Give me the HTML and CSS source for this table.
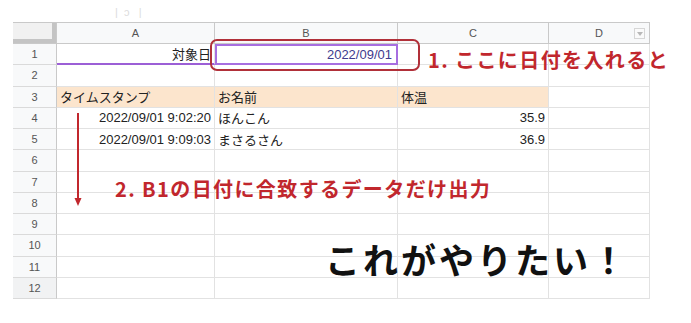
FILE: index.html
```html
<!DOCTYPE html>
<html lang="ja">
<head>
<meta charset="utf-8">
<link rel="stylesheet" href="styles.css">
</head>
<body>
<div class="page">
  <div class="topbar"><span class="ghost">|&nbsp;&nbsp;ɔ&nbsp;&nbsp;&nbsp;|</span></div>
  <div class="sheet">
    <div class="c corner"></div>
    <div class="c colh">A</div>
    <div class="c colh">B</div>
    <div class="c colh">C</div>
    <div class="c colh colh-d">D<span class="dd"></span></div>

    <div class="c rowh">1</div>
    <div class="c right a1">対象日</div>
    <div class="c right b1">2022/09/01</div>
    <div class="c"></div>
    <div class="c"></div>

    <div class="c rowh">2</div>
    <div class="c"></div><div class="c"></div><div class="c"></div><div class="c"></div>

    <div class="c rowh">3</div>
    <div class="c head">タイムスタンプ</div>
    <div class="c head">お名前</div>
    <div class="c head">体温</div>
    <div class="c"></div>

    <div class="c rowh">4</div>
    <div class="c right">2022/09/01 9:02:20</div>
    <div class="c">ほんこん</div>
    <div class="c right">35.9</div>
    <div class="c"></div>

    <div class="c rowh">5</div>
    <div class="c right">2022/09/01 9:09:03</div>
    <div class="c">まさるさん</div>
    <div class="c right">36.9</div>
    <div class="c"></div>

    <div class="c rowh">6</div>
    <div class="c"></div><div class="c"></div><div class="c"></div><div class="c"></div>
    <div class="c rowh">7</div>
    <div class="c"></div><div class="c"></div><div class="c"></div><div class="c"></div>
    <div class="c rowh">8</div>
    <div class="c"></div><div class="c"></div><div class="c"></div><div class="c"></div>
    <div class="c rowh">9</div>
    <div class="c"></div><div class="c"></div><div class="c"></div><div class="c"></div>
    <div class="c rowh">10</div>
    <div class="c"></div><div class="c"></div><div class="c"></div><div class="c"></div>
    <div class="c rowh">11</div>
    <div class="c"></div><div class="c"></div><div class="c"></div><div class="c"></div>
    <div class="c rowh rowh-sel">12</div>
    <div class="c"></div><div class="c"></div><div class="c"></div><div class="c"></div>
  </div>
</div>

<div class="callout-box"></div>
<div class="note note-1">1. ここに日付を入れると</div>
<svg class="arrow" width="10" height="94" viewBox="0 0 10 94">
  <line x1="5" y1="0" x2="5" y2="88" stroke="#c1272d" stroke-width="2"/>
  <polygon points="1.5,85 8.5,85 5,93" fill="#c1272d"/>
</svg>
<div class="note note-2">2. B1の日付に合致するデータだけ出力</div>
<div class="big">これがやりたい！</div>
</body>
</html>
```
FILE: styles.css
```css
html, body {
  margin: 0;
  padding: 0;
  background: #ffffff;
}
body {
  position: relative;
  width: 691px;
  height: 323px;
  overflow: hidden;
  font-family: "Liberation Sans", "Noto Sans CJK JP", sans-serif;
}
.page {
  padding-left: 13px;
}
.topbar {
  height: 22px;
  position: relative;
}
.ghost {
  position: absolute;
  left: 102px;
  top: 6px;
  font-size: 11px;
  color: #dcdcdc;
}
.sheet {
  display: grid;
  grid-template-columns: 44px 158px 183px 151px 101px;
  grid-template-rows: 21px repeat(12, 21.25px);
  width: 637px;
  border-top: 1px solid #c9c9c9;
}
.c {
  box-sizing: border-box;
  border-right: 1px solid #e2e2e2;
  border-bottom: 1px solid #e2e2e2;
  display: flex;
  align-items: center;
  padding: 0 3px;
  font-size: 13px;
  color: #222;
  white-space: nowrap;
  overflow: hidden;
  font-family: "Liberation Sans", "Noto Sans CJK JP", sans-serif;
}
.right {
  justify-content: flex-end;
}
.corner {
  background: #f1f1f1;
  border-right: 1px solid #c9c9c9;
  border-bottom: 1px solid #c9c9c9;
  box-shadow: inset -4px -4px 0 #c4c4c4;
}
.colh {
  background: #f8f9fa;
  border-right: 1px solid #c9c9c9;
  border-bottom: 1px solid #c9c9c9;
  justify-content: center;
  font-size: 11px;
  color: #555;
}
.colh-d {
  position: relative;
}
.dd {
  position: absolute;
  right: 4px;
  top: 5px;
  width: 11px;
  height: 11px;
  box-sizing: border-box;
  border: 1px solid #d6d6d6;
  background: #fafafa;
}
.dd::after {
  content: "";
  position: absolute;
  left: 2px;
  top: 3px;
  border-left: 3px solid transparent;
  border-right: 3px solid transparent;
  border-top: 4px solid #b8b8b8;
}
.rowh {
  background: #f8f9fa;
  border-right: 1px solid #c9c9c9;
  border-bottom: 1px solid #dadada;
  justify-content: center;
  font-size: 11px;
  color: #555;
}
.rowh-sel {
  background: #f1f2f3;
}
.a1 {
  border-bottom: 2px solid #9c5fd6;
}
.b1 {
  border: 2px solid #a76ee0;
  color: #3e3b8d;
  padding-right: 4px;
}
.head {
  background: #fce5cd;
}
.callout-box {
  position: absolute;
  left: 210px;
  top: 39px;
  width: 210px;
  height: 32px;
  box-sizing: border-box;
  border: 2px solid #b13039;
  border-radius: 7px;
}
.note {
  position: absolute;
  font-family: "Noto Sans CJK JP", sans-serif;
  font-weight: 700;
  font-size: 20px;
  letter-spacing: 1.4px;
  color: #c1272d;
  line-height: 1;
  white-space: nowrap;
}
.note-1 {
  left: 428px;
  top: 50px;
}
.note-2 {
  left: 115px;
  top: 179px;
}
.arrow {
  position: absolute;
  left: 73px;
  top: 113px;
}
.big {
  position: absolute;
  left: 325px;
  top: 241px;
  font-family: "Noto Sans CJK JP", sans-serif;
  font-weight: 700;
  font-size: 35px;
  letter-spacing: 3px;
  line-height: 1;
  color: #111;
  white-space: nowrap;
}
```
